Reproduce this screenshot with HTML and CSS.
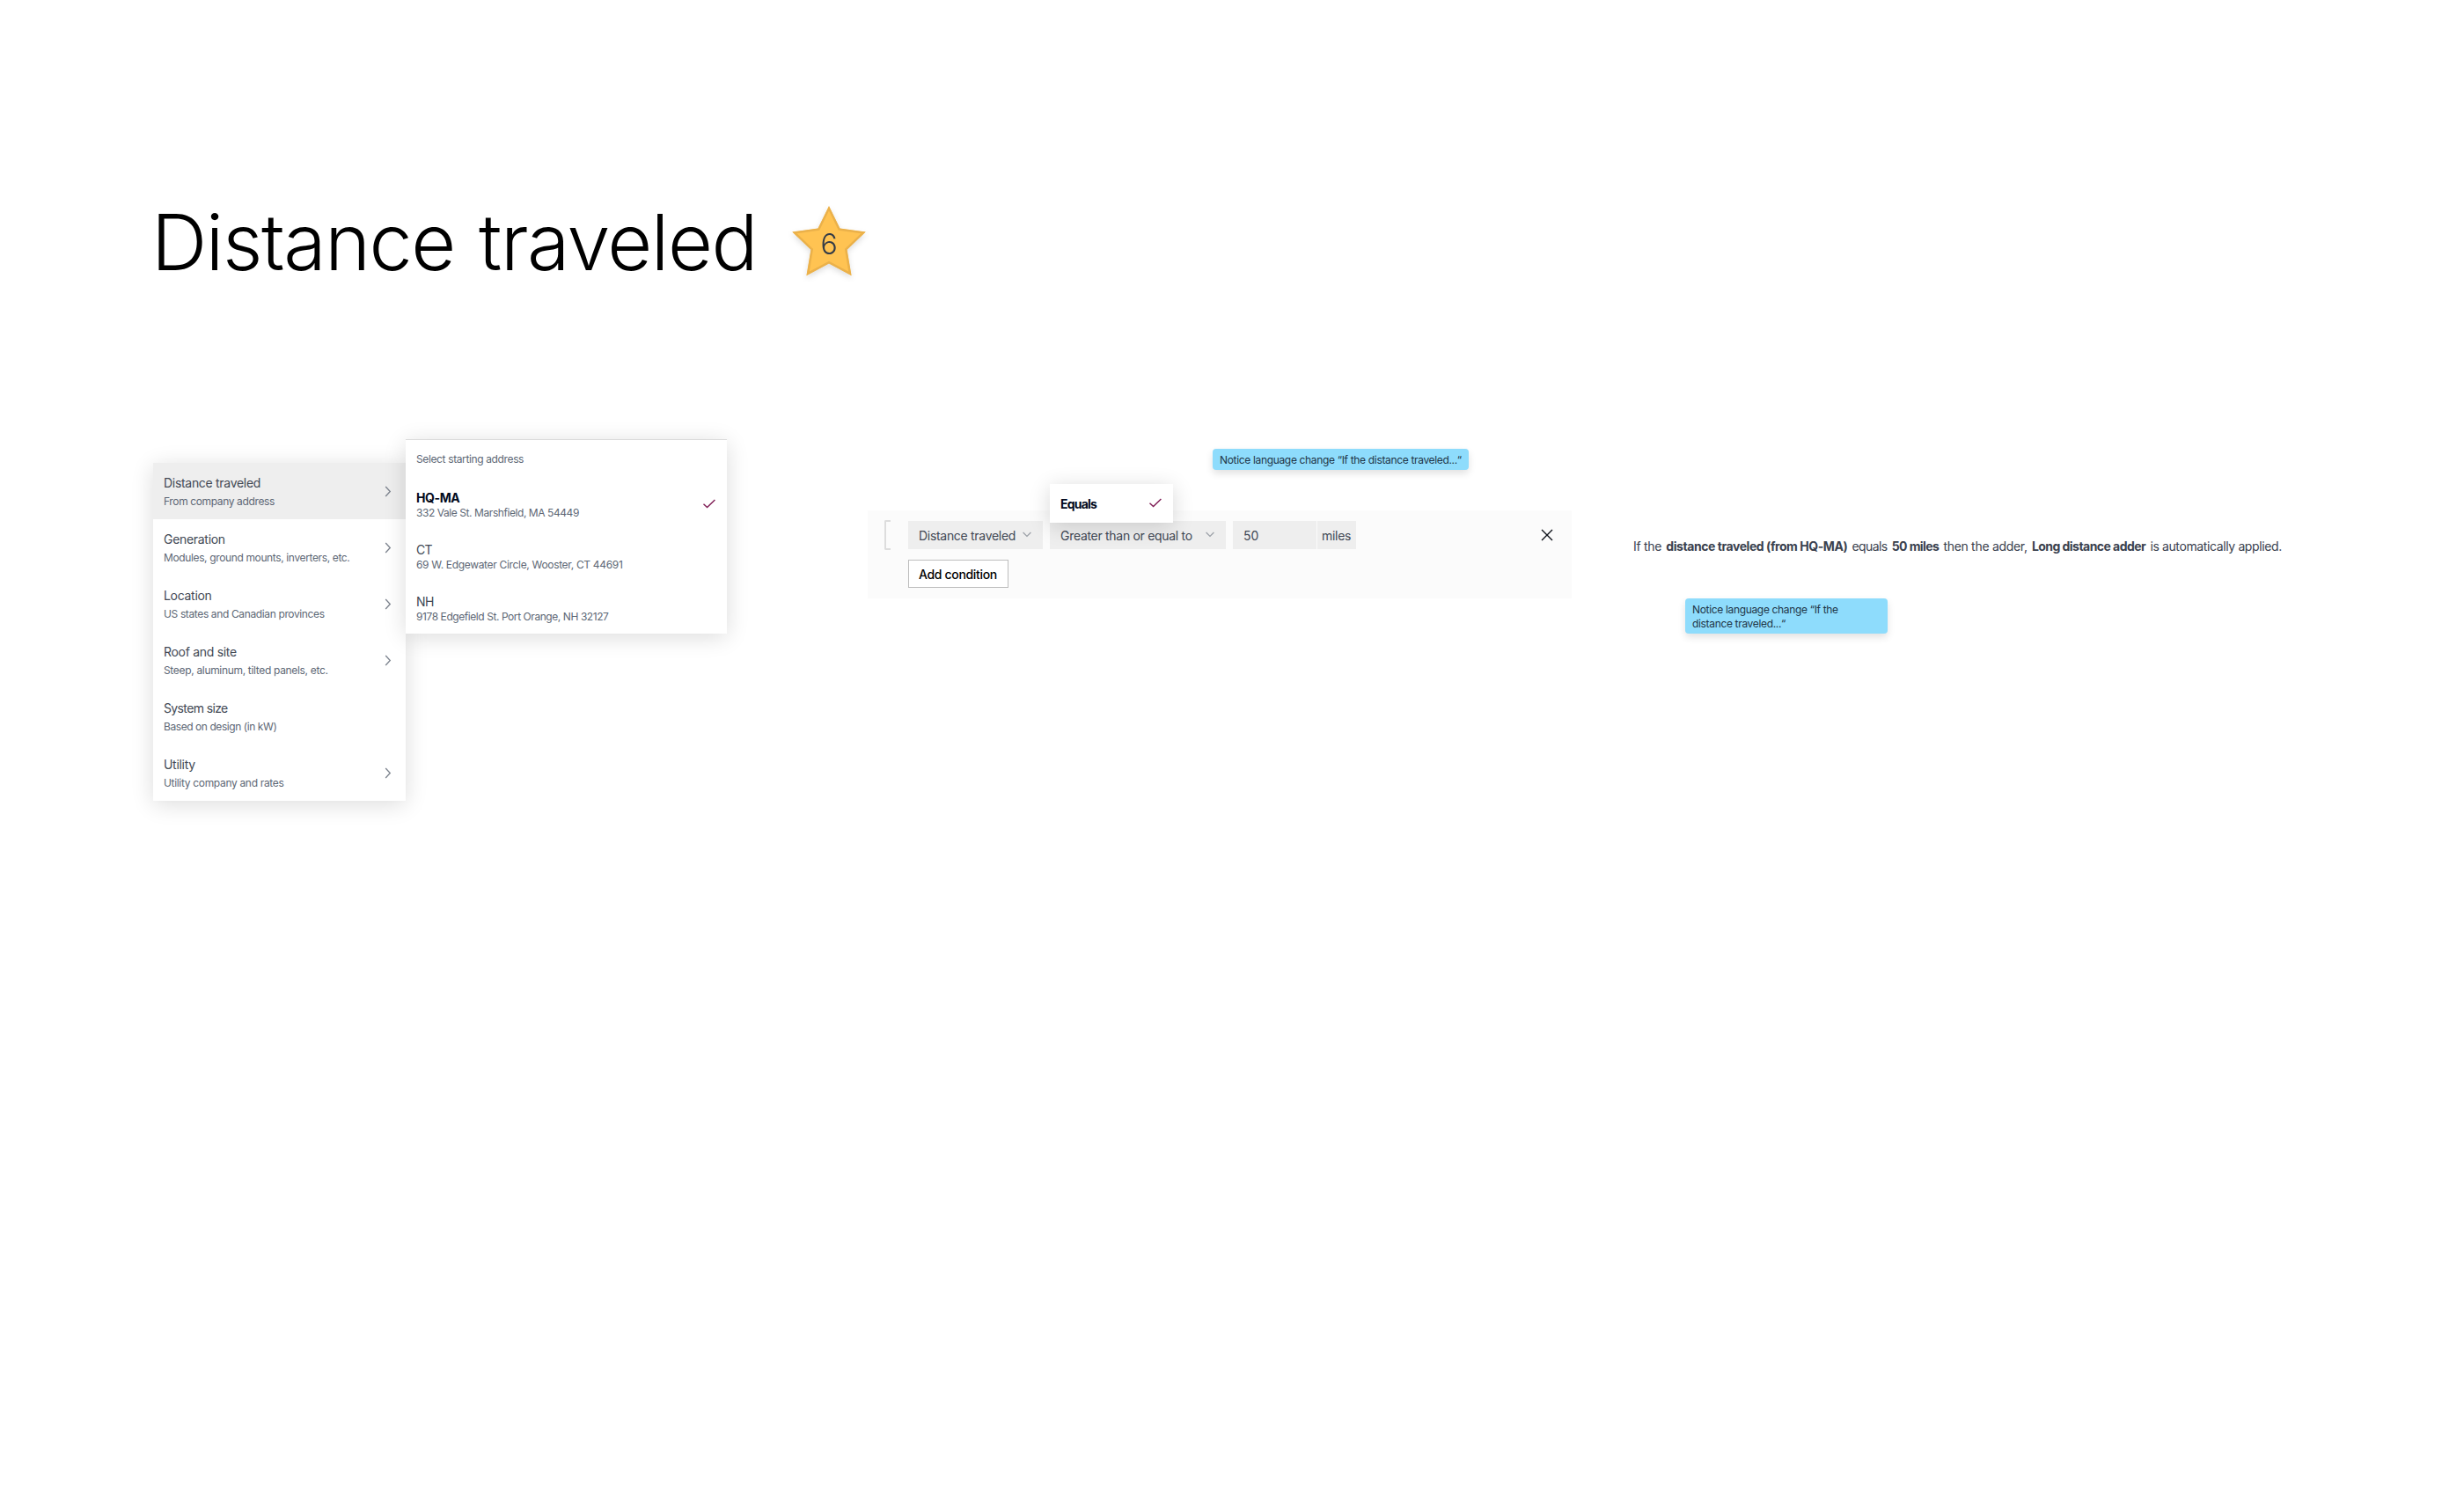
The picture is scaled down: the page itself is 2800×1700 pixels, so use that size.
FILE: index.html
```html
<!DOCTYPE html>
<html lang="en">
<head>
<meta charset="utf-8">
<title>Distance traveled</title>
<link rel="stylesheet" href="styles.css">
</head>
<body>
<svg class="defs" aria-hidden="true">
  <symbol id="chevron-right" viewBox="0 0 8 13"><path d="M1.2 1 6.3 6.5 1.2 12"/></symbol>
  <symbol id="chevron-down" viewBox="0 0 10 7"><path d="M.6 1 5 5.4 9.4 1"/></symbol>
  <symbol id="check" viewBox="0 0 14 11"><path d="M.5 5.8 4.6 9.6 13.4.9"/></symbol>
</svg>

<header class="header">
  <h1 class="title">Distance traveled</h1>
  <div class="star">
    <svg viewBox="0 0 84 80" width="84" height="80">
      <clipPath id="star-clip"><path d="M42 0 54.5 25.5 83.8 29.6 62.6 49.8 67.6 79.3 42 65.6 16.4 79.3 21.4 49.8.2 29.6 29.5 25.5Z"/></clipPath>
      <path class="star-shape" clip-path="url(#star-clip)" d="M42 0 54.5 25.5 83.8 29.6 62.6 49.8 67.6 79.3 42 65.6 16.4 79.3 21.4 49.8.2 29.6 29.5 25.5Z"/>
    </svg>
    <span class="star-number">6</span>
  </div>
</header>

<main class="board">
  <nav class="menu">
    <div class="menu-item active"><div><div class="name">Distance traveled</div><div class="detail">From company address</div></div><svg class="chevron"><use href="#chevron-right"/></svg></div>
    <div class="menu-item"><div><div class="name">Generation</div><div class="detail">Modules, ground mounts, inverters, etc.</div></div><svg class="chevron"><use href="#chevron-right"/></svg></div>
    <div class="menu-item"><div><div class="name">Location</div><div class="detail">US states and Canadian provinces</div></div><svg class="chevron"><use href="#chevron-right"/></svg></div>
    <div class="menu-item"><div><div class="name">Roof and site</div><div class="detail loose">Steep, aluminum, tilted panels, etc.</div></div><svg class="chevron"><use href="#chevron-right"/></svg></div>
    <div class="menu-item"><div><div class="name tight">System size</div><div class="detail snug">Based on design (in kW)</div></div></div>
    <div class="menu-item"><div><div class="name">Utility</div><div class="detail loose">Utility company and rates</div></div><svg class="chevron"><use href="#chevron-right"/></svg></div>
  </nav>

  <section class="addresses">
    <div class="detail addresses-label">Select starting address</div>
    <div class="address selected"><div><div class="name">HQ-MA</div><div class="detail snug">332 Vale St. Marshfield, MA 54449</div></div><svg class="check"><use href="#check"/></svg></div>
    <div class="address"><div><div class="name tight">CT</div><div class="detail loose">69 W. Edgewater Circle, Wooster, CT 44691</div></div></div>
    <div class="address"><div><div class="name tight">NH</div><div class="detail snug">9178 Edgefield St. Port Orange, NH 32127</div></div></div>
  </section>

  <section class="conditions">
    <div class="bracket"></div>
    <div class="rows">
      <div class="row">
        <div class="field field-subject"><span>Distance traveled</span><svg class="caret"><use href="#chevron-down"/></svg></div>
        <div class="field field-operator"><span>Greater than or equal to</span><svg class="caret"><use href="#chevron-down"/></svg>
          <div class="dropdown"><span>Equals</span><svg class="check"><use href="#check"/></svg></div>
        </div>
        <div class="amount">
          <div class="field field-value"><span>50</span></div>
          <div class="field field-unit"><span>miles</span></div>
        </div>
      </div>
      <button class="add">Add condition</button>
    </div>
    <svg class="close" viewBox="0 0 14 14"><path d="M1 1 13 13M13 1 1 13"/></svg>
  </section>

  <p class="summary"><span>If the</span><b class="subject">distance traveled (from HQ-MA)</b><span class="tight">equals</span><b class="tight">50 miles</b><span>then the adder,</span><b>Long distance adder</b><span class="end">is automatically applied.</span></p>
</main>

<aside class="note note-condition">Notice language change “If the distance traveled...“</aside>
<aside class="note note-summary">Notice language change “If the<br>distance traveled...“</aside>
</body>
</html>
```
FILE: styles.css
```css
* { box-sizing: border-box; }

body {
  margin: 0;
  position: relative;
  width: 2800px;
  height: 1700px;
  background: #fff;
  overflow: hidden;
  font: 400 14px/20px Inter, "Liberation Sans", sans-serif;
  letter-spacing: -0.3px;
  color: #414854;
}

svg { display: block; fill: none; }
.defs { position: absolute; width: 0; height: 0; }

.header {
  display: flex;
  padding: 222px 0 0 172px;
  height: 499px;
}

.title {
  margin: 0;
  width: 728px;
  height: 106px;
  font-size: 88px;
  font-weight: 300;
  line-height: 106px;
  letter-spacing: -1.45px;
  word-spacing: 4px;
  white-space: nowrap;
  color: #000;
}

.star {
  position: relative;
  width: 84px;
  height: 80px;
  margin-top: 12px;
  filter: drop-shadow(0 3px 3px rgba(0, 0, 0, .13));
}
.star-shape { fill: #ffc352; stroke: #ebb14a; stroke-width: 5; }
.star-number {
  position: absolute;
  inset: 24px 0 auto 0;
  text-align: center;
  font-size: 32px;
  font-weight: 300;
  line-height: 40px;
  letter-spacing: 0;
  color: #333b47;
}

.board { display: flex; align-items: flex-start; padding-left: 174px; }

.menu, .addresses { background: #fff; box-shadow: 0 4px 24px rgba(0, 0, 0, .14); }
.menu { width: 287px; margin-top: 27px; }
.menu-item {
  display: flex;
  justify-content: space-between;
  align-items: flex-start;
  height: 64px;
  padding: 13px 16px 0 12px;
}
.menu-item.active { background: #eee; }
.menu-item .detail { margin-top: 3px; }

.name { white-space: nowrap; color: #414854; }
.name.tight { letter-spacing: -0.63px; }
.detail {
  font-size: 12px;
  line-height: 16px;
  letter-spacing: -0.37px;
  white-space: nowrap;
  color: #5d6775;
}
.detail.loose { letter-spacing: -0.325px; }
.detail.snug { letter-spacing: -0.43px; }

.chevron { width: 8px; height: 13px; margin-top: 13px; stroke: #7b828d; stroke-width: 1.3; }
.check { width: 14px; height: 11px; stroke: #7f1d55; stroke-width: 1.4; }
.caret { width: 10px; height: 7px; stroke: #9a9fa6; stroke-width: 1.2; margin-top: -2px; }

.addresses {
  position: relative;
  width: 365px;
  height: 221px;
  padding-top: 14px;
  border-top: 1px solid #dcdcdc;
}
.addresses-label { padding: 0 12px; height: 29px; }
.address {
  display: flex;
  justify-content: space-between;
  height: 59px;
  padding: 14px 13px 0 12px;
}
.address .name { line-height: 18px; }
.address .check { margin-top: 10px; }
.selected .name { font-weight: 700; letter-spacing: -0.4px; color: #030a1c; }

.conditions {
  display: flex;
  align-items: flex-start;
  width: 800px;
  height: 100px;
  margin: 81px 0 0 160px;
  padding: 12px 21px 12px 19px;
  background: #fbfbfb;
}
.bracket {
  width: 7px;
  height: 34px;
  margin: -1px 20px 0 0;
  border: 2px solid #ddd;
  border-right: 0;
  border-radius: 2px 0 0 2px;
}
.rows { flex: 1; display: flex; flex-direction: column; align-items: flex-start; gap: 12px; }
.row { display: flex; gap: 8px; }
.field {
  position: relative;
  display: flex;
  justify-content: space-between;
  align-items: center;
  height: 32px;
  padding: 1px 13px 0 12px;
  white-space: nowrap;
  background: #eee;
}
.field-subject { width: 153px; }
.field-operator { width: 200px; }
.amount { display: flex; gap: 1px; }
.field-value { width: 95px; letter-spacing: 0; }
.field-unit { width: 44px; padding: 1px 0 0 5px; }

.dropdown {
  position: absolute;
  left: 0;
  top: -42px;
  display: flex;
  justify-content: space-between;
  align-items: center;
  width: 140px;
  height: 44px;
  padding: 1px 13px 0 12px;
  font-weight: 700;
  letter-spacing: -0.8px;
  color: #030a1c;
  background: #fff;
  box-shadow: 0 4px 24px rgba(0, 0, 0, .16);
}
.dropdown .check { margin-top: -2px; }

.add {
  width: 114px;
  height: 32px;
  padding: 1px 0 0 11px;
  border: 1px solid #bdbdbd;
  background: #fff;
  font: 500 14px/20px Inter, "Liberation Sans", sans-serif;
  letter-spacing: -0.33px;
  text-align: left;
  color: #000;
}

.close { width: 14px; height: 14px; margin-top: 9px; stroke: #0c1018; stroke-width: 1.4; }

.summary {
  display: flex;
  gap: 5.2px;
  margin: 112px 0 0 70px;
  white-space: nowrap;
  color: #3a414e;
}
.summary b { font-weight: 700; letter-spacing: -0.54px; }
.summary .subject { letter-spacing: -0.44px; }
.summary .tight { letter-spacing: -0.6px; }
.summary .end { letter-spacing: -0.38px; }

.note {
  position: absolute;
  padding: 5px 8px 3px;
  border-radius: 4px;
  background: #8edcfc;
  box-shadow: 0 4px 8px rgba(0, 0, 0, .12);
  font-size: 12px;
  line-height: 16px;
  letter-spacing: -0.335px;
  white-space: nowrap;
  color: #1f3547;
}
.note-condition { left: 1378px; top: 510px; width: 291px; }
.note-summary { left: 1915px; top: 680px; width: 230px; }
```
